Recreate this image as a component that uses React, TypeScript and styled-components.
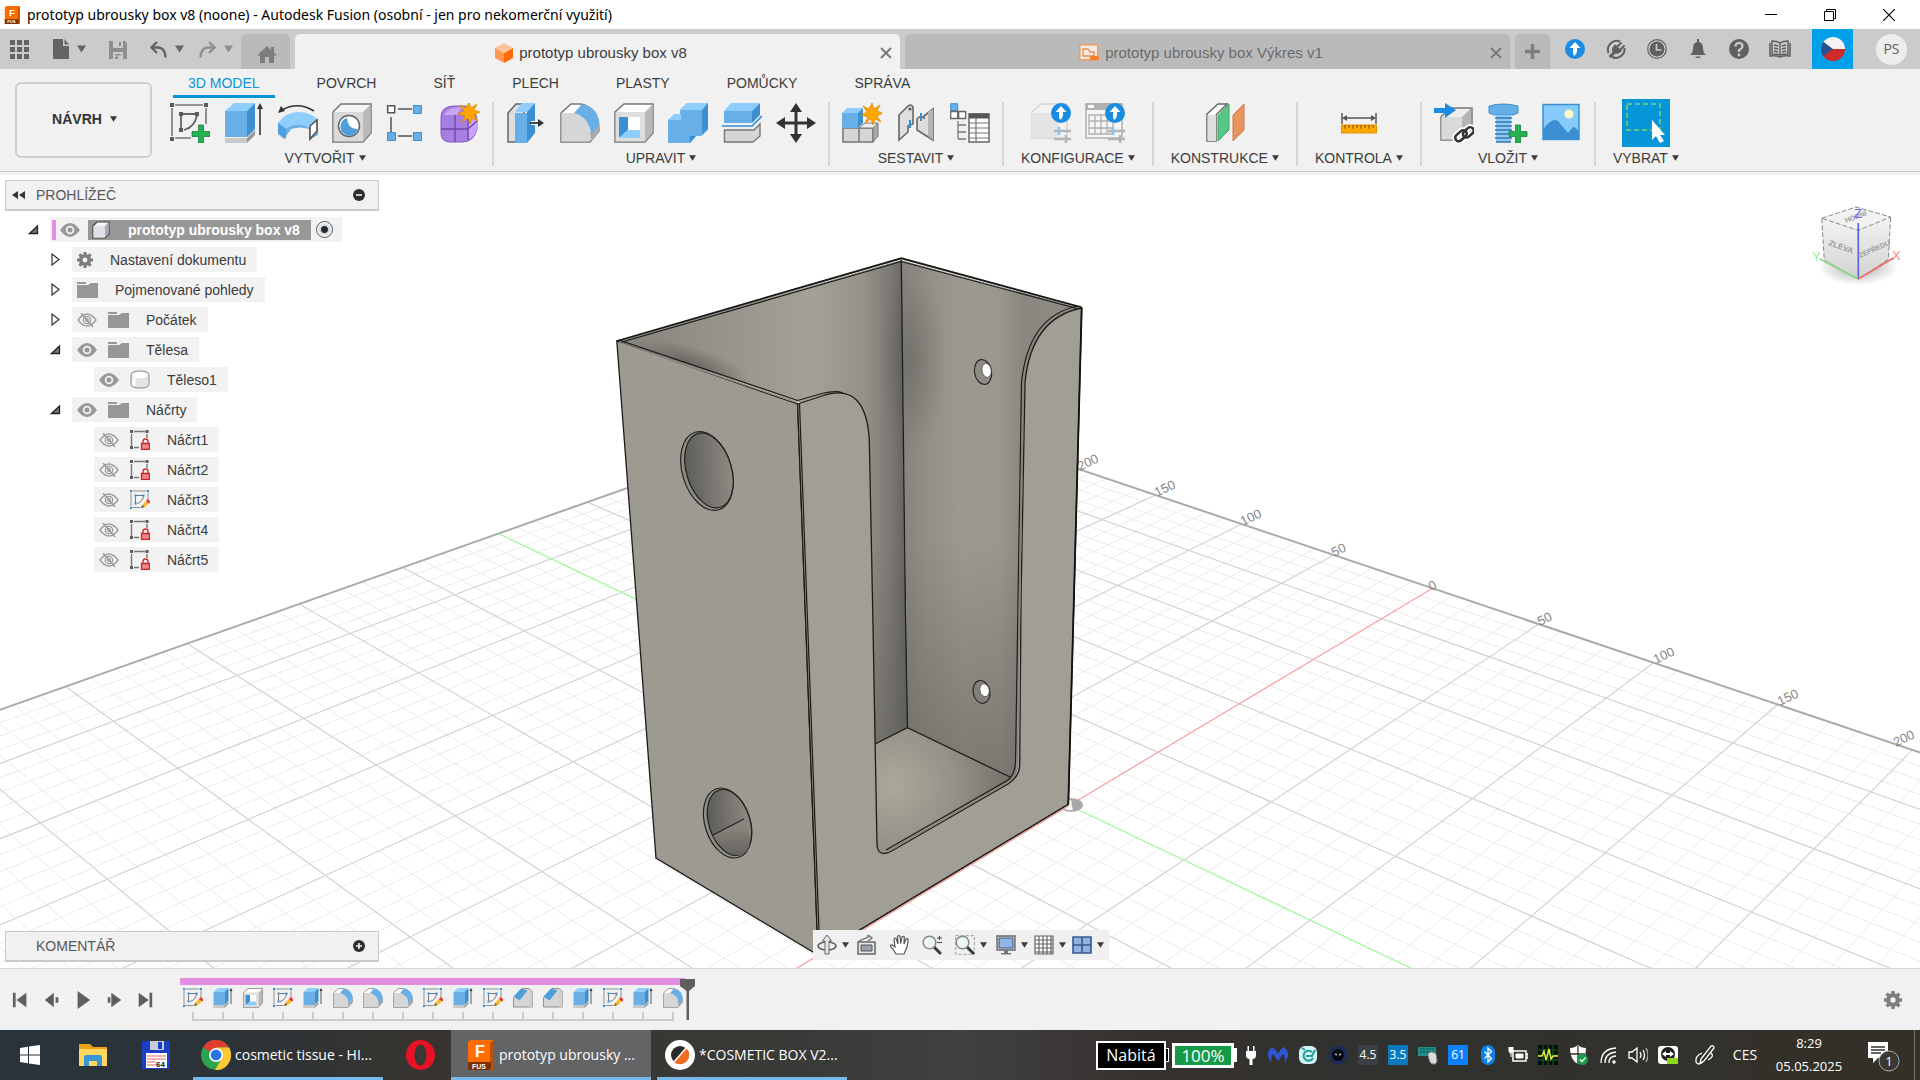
import React from "react";
import styled, { createGlobalStyle } from "styled-components";

const ui = `"Liberation Sans", Arial, sans-serif`;
const win = `"Open Sans", "Noto Sans", sans-serif`;

const Global = createGlobalStyle`
  *, *::before, *::after { box-sizing: border-box; }
  body { margin: 0; font-family: ${ui}; font-size: 14px; color: #3c3c3c; background: #fff; overflow: hidden; }
  button { font: inherit; color: inherit; background: none; border: 0; padding: 0; margin: 0; display: flex; align-items: center; justify-content: center; }
  svg { display: block; flex: none; }
  ul { list-style: none; margin: 0; padding: 0; }
`;

/* ---------- shell ---------- */
const Shell = styled.div`
  display: flex;
  flex-direction: column;
  height: 100vh;
`;

/* ---------- title bar ---------- */
const TitleBar = styled.header`
  display: flex;
  align-items: center;
  height: 29px;
  flex: none;
  padding: 0 5px 0 3px;
  gap: 6px;
  background: #fff;
  color: #000;
  font: 14px/20px "Noto Sans", sans-serif;
`;
const TitleText = styled.span`
  flex: 1;
`;
const WinButton = styled.button`
  width: 53px;
  height: 28px;
`;

/* ---------- document tab bar ---------- */
const TabBar = styled.div`
  display: flex;
  align-items: flex-end;
  height: 40px;
  flex: none;
  background: #cbcbcb;
  gap: 5px;
`;
const QuickTools = styled.div`
  display: flex;
  align-items: center;
  width: 236px;
  height: 40px;
  padding-left: 10px;
  color: #646464;
`;
const QuickButton = styled.button<{ $w: number; $dim?: boolean }>`
  width: ${(p) => p.$w}px;
  height: 32px;
  gap: 8px;
  justify-content: flex-start;
  color: ${(p) => (p.$dim ? "#8f8f8f" : "#646464")};
`;
const HomeTab = styled.button`
  width: 49px;
  height: 35px;
  padding: 6px 0 0 2px;
  border-radius: 5px 5px 0 0;
  background: #bababa;
  color: #7d7d7d;
`;
const DocTab = styled.div<{ $active?: boolean }>`
  flex: 1;
  display: flex;
  align-items: center;
  justify-content: center;
  height: 35px;
  gap: 5px;
  padding: 2px 7px 0 13px;
  border-radius: 5px 5px 0 0;
  font-size: 15px;
  background: ${(p) => (p.$active ? "#f1f1f1" : "#bababa")};
  color: ${(p) => (p.$active ? "#3c3c3c" : "#6b6b6b")};
`;
const DocName = styled.button`
  flex: 1;
  gap: 6px;
`;
const AddTab = styled(HomeTab)`
  width: 35px;
  padding: 0;
`;
const TopActions = styled.div`
  display: flex;
  align-items: center;
  width: 365px;
  height: 40px;
  padding-left: 4px;
  color: #606060;
`;
const TopButton = styled.button`
  width: 41px;
  height: 40px;
  padding-right: 9px;
`;
const FlagButton = styled.button`
  width: 41px;
  height: 40px;
  margin-left: 7px;
  background: #00a0e9;
`;
const Avatar = styled.button`
  width: 31px;
  height: 31px;
  margin-left: 23px;
  border-radius: 50%;
  background: #ededed;
  font: 14px/20px ${win};
`;

/* ---------- ribbon ---------- */
const Ribbon = styled.div`
  display: flex;
  height: 103px;
  flex: none;
  background: #f1f1f1;
  border-bottom: 1px solid #c8c8c8;
`;
const RibbonEdge = styled.div`
  height: 3px;
  flex: none;
  background: #f1f1f1;
`;
const Workspace = styled.button`
  width: 137px;
  height: 76px;
  margin: 13px 6px 0 15px;
  border: 2px solid #cfcfcf;
  border-radius: 6px;
  font-weight: bold;
  gap: 8px;
  color: #333;
  padding: 0 0 2px 2px;
`;
const RibbonBody = styled.div`
  flex: 1;
`;
const RibbonTabs = styled.nav`
  display: flex;
  height: 29px;
  gap: 27px;
  padding-left: 15px;
`;
const RibbonTab = styled.button<{ $active?: boolean }>`
  padding: 0 15px;
  height: 29px;
  color: ${(p) => (p.$active ? "#0696d7" : "#3c3c3c")};
  border-top: 1px solid transparent;
  border-bottom: 3px solid ${(p) => (p.$active ? "#0696d7" : "transparent")};
`;
const Groups = styled.div`
  display: flex;
`;
const Group = styled.section`
  display: flex;
  flex-direction: column;
  align-items: center;
  padding: 0 12px;
`;
const GroupIcons = styled.div`
  display: flex;
  align-items: center;
  height: 50px;
  gap: 14px;
`;
const GroupLabel = styled.button`
  gap: 4px;
  height: 20px;
  padding: 0 5px;
`;
const Divider = styled.div`
  width: 2px;
  height: 64px;
  margin-top: 4px;
  background: #d4d4d4;
`;
const ToolButton = styled.button<{ $selected?: boolean }>`
  width: ${(p) => (p.$selected ? 48 : 40)}px;
  height: ${(p) => (p.$selected ? 48 : 40)}px;
  background: ${(p) => (p.$selected ? "#0696d7" : "none")};
`;

/* ---------- canvas ---------- */
const Stage = styled.main`
  position: relative;
  flex: 1;
  min-height: 0;
  overflow: hidden;
  background: #fff;
`;
const Scene = styled.svg`
  position: absolute;
  inset: 0;
  width: 100%;
  height: 100%;
`;
const CubeSpot = styled.div`
  position: absolute;
  top: 22px;
  right: 16px;
`;
const BrowserPanel = styled.aside`
  position: absolute;
  top: 5px;
  left: 5px;
  width: 374px;
`;
const PanelHead = styled.div`
  display: flex;
  align-items: center;
  width: 374px;
  height: 31px;
  padding: 0 13px 0 6px;
  background: #f1f1f1;
  border: 1px solid #c9c9c9;
  border-bottom-width: 2px;
  color: #585858;
`;
const PanelTitle = styled.span`
  flex: 1;
  padding-left: 11px;
`;
const HeadSlot = styled.button`
  width: 13px;
  height: 16px;
`;
const Tree = styled.ul`
  display: flex;
  flex-direction: column;
  gap: 5px;
  padding-top: 6px;
`;
const Row = styled.li<{ $level: number }>`
  display: flex;
  align-items: center;
  height: 25px;
  padding-left: ${(p) => 23 + p.$level * 22}px;
`;
const Expander = styled.button`
  width: 11px;
  height: 25px;
  margin-right: 11px;
`;
const NoExpander = styled.span`
  width: 22px;
`;
const Chip = styled.div`
  display: flex;
  align-items: center;
  height: 25px;
  padding: 0 11px 0 5px;
  background: #f2f2f2;
`;
const ChipIcon = styled.span`
  display: flex;
  margin-right: 11px;
`;
const ChipText = styled.span`
  padding-left: 6px;
`;
const RootChip = styled(Chip)`
  padding: 0 9px 0 2px;
`;
const PinkMark = styled.span`
  width: 4px;
  height: 20px;
  margin-right: 4px;
  background: #e38ee3;
`;
const RootName = styled.span`
  display: flex;
  align-items: center;
  height: 20px;
  padding: 0 11px 0 4px;
  margin: 0 5px 0 8px;
  gap: 18px;
  background: #979797;
  color: #fff;
  font-weight: bold;
`;
const ActiveRadio = styled.input`
  appearance: none;
  width: 17px;
  height: 17px;
  margin: 0;
  border: 1px solid #555;
  border-radius: 50%;
  background: radial-gradient(circle, #2b2b2b 0 3px, #cfd5de 4px, #fff 8px);
`;
const CommentPanel = styled(PanelHead)`
  position: absolute;
  left: 5px;
  bottom: 6px;
`;
const NavBar = styled.div`
  position: absolute;
  bottom: 8px;
  left: 50%;
  transform: translateX(-50%);
  margin-left: 1px;
  display: flex;
  align-items: center;
  height: 30px;
  padding: 0 4px 0 3px;
  background: #f0f0f0;
`;
const NavButton = styled.button<{ $w: number }>`
  width: ${(p) => p.$w}px;
  height: 30px;
  gap: 5px;
`;

/* ---------- timeline ---------- */
const Timeline = styled.section`
  display: flex;
  height: 62px;
  flex: none;
  background: #f1f1f1;
  border-top: 1px solid #d6d6d6;
`;
const Playback = styled.div`
  display: flex;
  align-items: center;
  width: 178px;
  padding-left: 5px;
`;
const PlayButton = styled.button`
  width: 31px;
  height: 30px;
`;
const Track = styled.div`
  position: relative;
  padding-top: 9px;
`;
const TrackBar = styled.div`
  height: 7px;
  margin: 0 3px 0 2px;
  background: #e38ee3;
`;
const Steps = styled.div`
  display: flex;
`;
const Step = styled.button`
  width: 30px;
  height: 26px;
`;
const Ruler = styled.div`
  display: flex;
  border-bottom: 2px solid #cbcbcb;
  margin: 0 14px;
  padding-top: 1px;
  justify-content: space-between;
`;
const Tick = styled.i`
  width: 2px;
  height: 7px;
  background: #cbcbcb;
`;
const Marker = styled.div`
  position: absolute;
  right: -7px;
  top: 10px;
`;
const Settings = styled.button`
  margin: 0 18px 0 auto;
`;

/* ---------- taskbar ---------- */
const Taskbar = styled.footer`
  display: flex;
  align-items: center;
  height: 50px;
  flex: none;
  color: #fff;
  font: 14px/20px ${win};
  background: linear-gradient(90deg, #28333a 0, #2c3338 12%, #37342f 22%, #3a3a38 42%, #404042 50%, #37302d 60%, #30322f 70%, #343028 100%);
`;
const Launch = styled.button<{ $w: number }>`
  width: ${(p) => p.$w}px;
  height: 50px;
`;
const TaskButton = styled.button<{ $w: number; $active?: boolean }>`
  width: ${(p) => p.$w}px;
  height: 50px;
  padding: 3px 0 0 8px;
  justify-content: flex-start;
  gap: 4px;
  border-bottom: 3px solid #76b9ed;
  background: ${(p) => (p.$active ? "#626465" : "transparent")};
  margin-right: 6px;
`;
const FirstTask = styled(TaskButton)`
  margin-left: 7px;
`;
const Logo = styled.span`
  display: flex;
  padding-left: 6px;
`;
const Charged = styled.span`
  margin-left: auto;
  width: 70px;
  height: 29px;
  border: 2px solid #fff;
  background: #000;
  font-size: 16px;
  line-height: 24px;
  text-align: center;
`;
const Nub = styled.i<{ $fill?: boolean }>`
  width: 3px;
  height: 14px;
  border: 1px solid #fff;
  border-left: 0;
  background: ${(p) => (p.$fill ? "#fff" : "#000")};
`;
const Battery = styled.span`
  width: 62px;
  height: 25px;
  margin-left: 3px;
  border: 3px solid #fff;
  background: #169a4a;
  font-size: 17px;
  line-height: 19px;
  text-align: center;
`;
const Tray = styled.div`
  display: flex;
  align-items: center;
  padding-left: 2px;
`;
const TrayItem = styled.button<{ $narrow?: boolean }>`
  width: ${(p) => (p.$narrow ? 24 : 30)}px;
  height: 50px;
`;
const Gauge = styled.span<{ $bg: string }>`
  width: 20px;
  height: 20px;
  background: ${(p) => p.$bg};
  font-size: 12px;
  line-height: 20px;
  text-align: center;
`;
const PenButton = styled.button`
  width: 44px;
  height: 50px;
`;
const Lang = styled.button`
  width: 36px;
  margin-right: 4px;
`;
const Clock = styled.div`
  width: 84px;
  margin-right: 14px;
  text-align: center;
  font-size: 13px;
  line-height: 23px;
`;
const Notices = styled.button`
  width: 36px;
  margin-right: 13px;
`;
const PeekEdge = styled.i`
  width: 6px;
  height: 50px;
  border-left: 1px solid #77746e;
`;

/* ---------- small glyphs ---------- */
const Caret = ({ s = 7 }: { s?: number }) => (
  <svg width={s} height={s - 1} viewBox="0 0 10 8"><path d="M0 0h10L5 8z" fill="currentColor" /></svg>
);
const Circle = ({ plus }: { plus?: boolean }) => (
  <svg width="12" height="12" viewBox="0 0 12 12"><circle cx="6" cy="6" r="6" fill="#2e2e2e" /><path d={plus ? "M3 6h6M6 3v6" : "M3 6h6"} stroke="#f1f1f1" strokeWidth="1.6" /></svg>
);
const Cross = () => (
  <svg width="14" height="14" viewBox="0 0 14 14"><path d="M2 2l10 10M12 2L2 12" stroke="#777" strokeWidth="1.8" /></svg>
);
const FusionLogo = ({ w = 30, h = 30 }: { w?: number; h?: number }) => (
  <svg width={w} height={h} viewBox="0 0 30 30">
    <path d="M3 2l3-2h22v28l-3 2H3z" fill="#ff6d00" /><path d="M25 2h3v28h-3z" fill="#c24e00" />
    <path d="M3 22h23v6l-2 2H3z" fill="#7a2f00" />
    <text x="10" y="17" fontFamily={ui} fontWeight="bold" fontSize="16" fill="#fff">F</text>
    <text x="7" y="29" fontFamily={ui} fontWeight="bold" fontSize="7" fill="#fff">FUS</text>
  </svg>
);
const Up = ({ x = 0, y = 0 }: { x?: number; y?: number }) => (
  <g transform={`translate(${x} ${y})`}><circle cx="10" cy="10" r="10" fill="#1a8ce3" /><path d="M10 3l5.500 6H12v3q0 3-3 5-1.500-3-1-5V9H4.500z" fill="#fff" /></g>
);
const Star = ({ x, y }: { x: number; y: number }) => (
  <path transform={`translate(${x} ${y})`} d="M0-11l2 6 6-4-3 6 6 2-6 3 4 6-6-3-2 6-2-6-6 4 3-6-7-2 6-3-4-6 6 3z" fill="#ffa500" stroke="#d98800" strokeWidth=".7" />
);
const Pencil = () => <g><path d="M22 36l3-7 8-8 5 5-8 8z" fill="#f9b92b" /><path d="M22 36l2.500-6 4 4z" fill="#555" /><path d="M32 22l3-4 6 5-3 4z" fill="#e33" /></g>;

const SketchSteel = ({ s = 40, blue, pencil, plus }: { s?: number; blue?: boolean; pencil?: boolean; plus?: boolean }) => {
  const c = blue ? "#2f8fd8" : "#5b5b5b";
  return (
    <svg width={s} height={s} viewBox="0 0 40 40">
      <path d="M2 5v28M5 2h28M36 5v16M5 35h16" stroke="#777" strokeWidth="1.600" fill="none" />
      <path d="M11 11h16M11 13v13M27 12q-2 12-13 15" stroke="#666" strokeWidth="1.800" fill="none" />
      <g fill={c}><path d="M0 0h4v4H0zM34 0h4v4h-4zM0 34h4v4H0zM9 9h4v4H9zM25 9h4v4h-4zM9 25h4v4H9z" /></g>
      {plus && <path d="M28.500 22h5v6.500H40v5h-6.500V40h-5v-6.500H22v-5h6.500z" fill="#25b052" stroke="#16833a" strokeWidth=".8" />}
      {pencil && <Pencil />}
    </svg>
  );
};
const Extrude = ({ s = 40 }: { s?: number }) => (
  <svg width={s} height={s} viewBox="0 0 40 40">
    <path d="M1 35h22l8-8v5l-8 8H1z" fill="#999" /><path d="M1 35h22v5H1z" fill="#c9c9c9" />
    <path d="M1 8h22v26H1z" fill="#67afe6" /><path d="M1 8l9-8h21l-8 8z" fill="#8fcdfd" /><path d="M23 8l8-8v26l-8 8z" fill="#3c8fd0" />
    <path d="M36 32V4" stroke="#333" strokeWidth="1.600" /><path d="M36 0l3 6h-6z" fill="#333" />
  </svg>
);
const Fillet = ({ s = 40 }: { s?: number }) => (
  <svg width={s} height={s} viewBox="0 0 40 40">
    <path d="M1 10L11 1h10q18 4 18 27l-9 11H1z" fill="#fff" stroke="#777" strokeWidth="1.500" />
    <path d="M1.500 10H14q15 3 16 19v9.500H1.500z" fill="#d6d6d6" /><path d="M30 30l9-9v8l-8 9.500z" fill="#a9a9a9" />
    <path d="M14 10l8-9q16 3 17.500 20L31 31Q29 14 14 10z" fill="#67afe6" />
  </svg>
);
const Chamfer = ({ s = 40 }: { s?: number }) => (
  <svg width={s} height={s} viewBox="0 0 40 40">
    <path d="M1 20L18 1h14l7 6v31H1z" fill="#d6d6d6" stroke="#777" strokeWidth="1.500" /><path d="M32 1l7 7v30h-7z" fill="#d0d0d0" />
    <path d="M1 17L16 1l13 4-16 20z" fill="#4f9fdc" />
  </svg>
);
const Shell3d = ({ s = 40 }: { s?: number }) => (
  <svg width={s} height={s} viewBox="0 0 40 40">
    <path d="M1 9L10 1h29v29l-8 9H1z" fill="#fff" stroke="#777" strokeWidth="1.500" />
    <path d="M1.700 9H31v29.300H1.700z" fill="#dedede" /><path d="M31 9l7.500-7.500v28.300L31 38.500z" fill="#b9b9b9" /><path d="M5 14h21v21H5z" fill="#fff" />
    <path d="M5 14h9v13l-9 8z" fill="#3c8fd0" /><path d="M14 27h12v8H5z" fill="#8fcdfd" />
  </svg>
);

const ribbonIcons: Record<string, React.ReactNode> = {
  sketch: <SketchSteel plus />,
  extrude: <Extrude />,
  revolve: (
    <svg width="40" height="40" viewBox="0 0 40 40">
      <path d="M0 20l6-5h28l6 4v13l-9 5V26q-9-3-18 0l-7 10-6-5z" fill="#67afe6" /><path d="M0 20Q8 9 20 9q13 0 20 8l-9 8q-12-7-23 1z" fill="#8fcdfd" /><path d="M0 20l8 6v10l-8-6z" fill="#4f9fdc" />
      <path d="M32 23l7-6v11l-7 8z" fill="#fff" stroke="#555" strokeWidth="1.600" /><path d="M4 7q16-9 32 1" stroke="#333" strokeWidth="1.700" fill="none" /><path d="M0 10l3-7 4 5z" fill="#333" />
    </svg>
  ),
  hole: (
    <svg width="40" height="40" viewBox="0 0 40 40">
      <path d="M1 9l8-8h30v29l-8 9H1z" fill="#f5f5f5" stroke="#777" strokeWidth="1.500" /><path d="M1.700 9H31v29.300H1.700z" fill="#d9d9d9" /><path d="M31 9l7.500-7.500v28.300L31 38.500z" fill="#b9b9b9" />
      <circle cx="17" cy="23" r="10.500" fill="#fff" stroke="#666" strokeWidth="1.500" /><path d="M15 15a9 9 0 1 0 11 11q-10 1-11-11z" fill="#4f9fdc" />
    </svg>
  ),
  pattern: (
    <svg width="40" height="40" viewBox="0 0 40 40">
      <path d="M12 6h14M12 33h14M5 14v15" stroke="#555" strokeWidth="1.500" /><path d="M1.700 2.700h7v7h-7z" fill="#fff" stroke="#555" strokeWidth="1.500" />
      <path d="M27.500 2.500h8v8h-8zM1.500 29.500h8v8h-8zM27.500 29.500h8v8h-8z" fill="#67afe6" stroke="#3c8fd0" />
    </svg>
  ),
  form: (
    <svg width="40" height="40" viewBox="0 0 40 40">
      <path d="M1 14q0-11 14-11h10q12 5 12 14v9q-3 13-15 13H9q-8-1-8-9z" fill="#a77ee2" stroke="#8458c4" /><path d="M4 12Q8 4 22 4l-5 8zM28 14q8-2 9 3v8q-1 8-8 11z" fill="#c9a5f7" />
      <path d="M1 26h27l9-8M15 12v27M28 16v21" stroke="#6e45ab" strokeWidth="1.300" fill="none" /><Star x={29} y={10} />
    </svg>
  ),
  presspull: (
    <svg width="40" height="40" viewBox="0 0 40 40">
      <path d="M2 10l8-9h8v38H2z" fill="#dedede" stroke="#666" strokeWidth="1.500" /><path d="M9 10h12v30H9z" fill="#67afe6" /><path d="M9 9l7-9h13l-8 9z" fill="#8fcdfd" /><path d="M21 9l8-9v30l-8 10z" fill="#3c8fd0" />
      <path d="M25 20h8" stroke="#fff" strokeWidth="4" /><path d="M24 20h9" stroke="#333" strokeWidth="1.800" /><path d="M38 20l-6-4v8z" fill="#333" />
    </svg>
  ),
  fillet: <Fillet />,
  shell: <Shell3d />,
  combine: (
    <svg width="40" height="40" viewBox="0 0 40 40">
      <path d="M0 16h12V7L19 0h21v27l-7 6h-5l-6 7H0z" fill="#67afe6" /><path d="M0 17l6-6h7v6zM13 7l6-7h21l-6 7z" fill="#8fcdfd" /><path d="M34 7l6-7v25l-6 7zM22 33h6l-6 7z" fill="#3c8fd0" />
    </svg>
  ),
  split: (
    <svg width="40" height="40" viewBox="0 0 40 40">
      <path d="M2 8h28v12H2z" fill="#67afe6" /><path d="M2 8l7-8h29l-8 8z" fill="#8fcdfd" /><path d="M30 8l8-8v12l-8 8z" fill="#3c8fd0" />
      <path d="M0 23h30l10-10" stroke="#2f8fd8" strokeWidth="1.600" fill="none" /><path d="M2.500 27H32l6-6v12l-7 6H2.500z" fill="#d6d6d6" stroke="#777" strokeWidth="1.400" />
    </svg>
  ),
  move: <svg width="40" height="40" viewBox="0 0 40 40"><path d="M20 6v28M6 20h28" stroke="#333" strokeWidth="3" /><path d="M20 0l6 9H14zM20 40l6-9H14zM0 20l9-6v12zM40 20l-9-6v12z" fill="#333" /></svg>,
  component: (
    <svg width="40" height="40" viewBox="0 0 40 40">
      <path d="M1 25h16v14H1zM17 25h14v14H17z" fill="#d6d6d6" stroke="#777" strokeWidth="1.500" /><path d="M17 25l6-5h13l-5 5z" fill="#eee" stroke="#777" /><path d="M31 25l5-5v13l-5 6z" fill="#aaa" stroke="#777" />
      <path d="M0 10h16v15H0z" fill="#67afe6" /><path d="M0 10l5-5h16l-5 5z" fill="#8fcdfd" /><path d="M16 10l5-5v15l-5 5z" fill="#3c8fd0" /><Star x={30} y={11} />
    </svg>
  ),
  joint: (
    <svg width="40" height="40" viewBox="0 0 40 40">
      <path d="M3 12L11 4q4-4 6 0v17l-5 2v6l-9 8zM37 6v31L21 27V16q3-4 7-1v-2z" fill="#dedede" stroke="#666" strokeWidth="1.600" /><path d="M37 6v31l-5-4V9z" fill="#b5b5b5" /><path d="M14 17v8M25 10v8" stroke="#2f8fd8" strokeWidth="2" /><circle cx="14" cy="6" r="1.500" fill="#555" />
    </svg>
  ),
  bom: (
    <svg width="40" height="40" viewBox="0 0 40 40">
      <path d="M.7.7h7v7h-7z" fill="#67afe6" stroke="#3c8fd0" /><path d="M.7 8.500h7v7h-7zM8.700 8.500h7v7h-7z" fill="#fff" stroke="#666" strokeWidth="1.300" /><path d="M8 18v18M8 22h8M8 29h8M8 36h8" stroke="#777" strokeWidth="1.300" />
      <path d="M19 11h20v28H19z" fill="#fff" stroke="#666" strokeWidth="1.500" /><path d="M19 10.500h20v5H19z" fill="#555" /><path d="M19 20h20M19 25h20M19 30h20M19 35h20M26 15v24" stroke="#777" strokeWidth="1.200" />
    </svg>
  ),
  config1: (
    <svg width="40" height="40" viewBox="0 0 40 40">
      <path d="M1 9l9-8h26v34H1z" fill="#f2f2f2" stroke="#c4c4c4" /><path d="M1 10h27v25H1z" fill="#e4e4e4" /><Up x={20} y={0} />
      <path d="M23 28h18M23 36h18" stroke="#b5b5b5" strokeWidth="2.500" /><path d="M28 24v8" stroke="#8fc3f0" strokeWidth="2.500" /><path d="M35 32v8" stroke="#b5b5b5" strokeWidth="2.500" />
    </svg>
  ),
  config2: (
    <svg width="40" height="40" viewBox="0 0 40 40">
      <path d="M1 1h36v34H1z" fill="#f5f5f5" stroke="#b0b0b0" strokeWidth="1.500" /><path d="M1 0h36v7H1z" fill="#b0b0b0" /><path d="M3 2h6v3H3z" fill="#fff" /><path d="M4 12h24v19H4zM4 18h24M4 25h24M10 12v19M16 12v19M22 12v19" fill="none" stroke="#b0b0b0" strokeWidth="1.300" /><Up x={20} y={0} />
      <path d="M23 28h18M23 36h18" stroke="#b5b5b5" strokeWidth="2.500" /><path d="M28 24v8" stroke="#8fc3f0" strokeWidth="2.500" /><path d="M35 32v8" stroke="#b5b5b5" strokeWidth="2.500" />
    </svg>
  ),
  plane: (
    <svg width="40" height="40" viewBox="0 0 40 40">
      <path d="M2 11L13 1h9l-11 11v26H2z" fill="#fff" stroke="#666" strokeWidth="1.500" /><path d="M2.500 12H11v26H2.500z" fill="#dedede" /><path d="M13 13L24 1v26L13 38z" fill="#57c785" stroke="#3aa564" /><path d="M28 12L39 1v26L28 38z" fill="#e8965f" stroke="#cd7a42" />
    </svg>
  ),
  measure: (
    <svg width="40" height="40" viewBox="0 0 40 40">
      <path d="M3 10v11M37 10v11M5 15h30" stroke="#555" strokeWidth="1.500" /><path d="M3 15l5-3v6zM37 15l-5-3v6z" fill="#555" /><path d="M2.500 22h35v8h-35z" fill="#ffa800" stroke="#dd9000" /><path d="M6 22v4M10 22v3M14 22v4M18 22v3M22 22v4M26 22v3M30 22v4M34 22v3" stroke="#7c5200" />
    </svg>
  ),
  insert: (
    <svg width="40" height="40" viewBox="0 0 40 40">
      <path d="M7 14l9-9h22v22L28 37H7z" fill="#eee" stroke="#777" strokeWidth="1.500" /><path d="M7.500 14H28v22.500H7.500z" fill="#d9d9d9" /><path d="M28 14l9-9v22l-9 9z" fill="#b5b5b5" />
      <path d="M0 5h11V0l11 7-11 8v-5H0z" fill="#1a8ce3" /><g fill="none" stroke="#fff" strokeWidth="6"><rect x="20" y="29" width="13" height="7" rx="3.500" transform="rotate(-42 27 32)" /><rect x="28" y="26" width="12" height="7" rx="3.500" transform="rotate(-42 34 29)" /></g>
      <g fill="none" stroke="#333" strokeWidth="2.600"><rect x="20" y="29" width="13" height="7" rx="3.500" transform="rotate(-42 27 32)" /><rect x="28" y="26" width="12" height="7" rx="3.500" transform="rotate(-42 34 29)" /></g>
    </svg>
  ),
  bolt: (
    <svg width="40" height="40" viewBox="0 0 40 40">
      <path d="M1 3q14-4 29 0v7l-5 2H6l-5-2z" fill="#67afe6" stroke="#3c8fd0" /><path d="M8 12h15v27H8z" fill="#8fc8f5" /><path d="M7 15h17M7 19h17M7 23h17M7 27h17M7 31h17M7 35h17M8 39h15" stroke="#3177b3" strokeWidth="1.500" />
      <path d="M27.500 22h5v6.500H39v5h-6.500V40h-5v-6.500H21v-5h6.500z" fill="#25b052" stroke="#16833a" strokeWidth=".8" />
    </svg>
  ),
  image: (
    <svg width="40" height="40" viewBox="0 0 40 40"><path d="M1 1.500h36v35H1z" fill="#86cbfb" stroke="#3c8fd0" strokeWidth="1.500" /><path d="M1 27q9-13 15-9l10 12 5-6q3 0 6 5v8H1z" fill="#3c8fd0" /><circle cx="27" cy="11" r="4.500" fill="#fff7c4" /></svg>
  ),
  select: (
    <svg width="48" height="48" viewBox="0 0 48 48"><path d="M5 5h33v26H5z" fill="none" stroke="#74d275" strokeWidth="1.600" strokeDasharray="5 3" /><path d="M30 21l13 15h-5l4 6-4 2-4-7-4 4z" fill="#fff" /></svg>
  ),
};

const groups = [
  { name: "VYTVOŘIT", icons: ["sketch", "extrude", "revolve", "hole", "pattern", "form"] },
  { name: "UPRAVIT", icons: ["presspull", "fillet", "shell", "combine", "split", "move"] },
  { name: "SESTAVIT", icons: ["component", "joint", "bom"] },
  { name: "KONFIGURACE", icons: ["config1", "config2"] },
  { name: "KONSTRUKCE", icons: ["plane"] },
  { name: "KONTROLA", icons: ["measure"] },
  { name: "VLOŽIT", icons: ["insert", "bolt", "image"] },
  { name: "VYBRAT", icons: ["select"] },
];

/* ---------- browser tree ---------- */
const Eye = ({ off }: { off?: boolean }) => (
  <svg width="20" height="14" viewBox="0 0 20 14">
    {off ? (
      <g fill="none" stroke="#9a9a9a" strokeWidth="1.300"><path d="M1 7q9-12 18 0-9 12-18 0z" /><circle cx="10" cy="7" r="3.700" /><circle cx="10" cy="7" r="1.300" /><path d="M4 0l12 14" strokeWidth="1.500" /></g>
    ) : (
      <g><path d="M0 7q10-14 20 0-10 14-20 0z" fill="#999" /><circle cx="10" cy="7" r="3.400" fill="#999" stroke="#f2f2f2" strokeWidth="1.800" /></g>
    )}
  </svg>
);
const Folder = () => <svg width="21" height="16" viewBox="0 0 21 16"><path d="M0 0h9v2H0zM0 3h11l3-2h7v15H0z" fill="#979797" /></svg>;
const gearTeeth = [0, 45, 90, 135].map((a) => <path key={a} d="M10 0v5M10 15v5" stroke="currentColor" strokeWidth="3.800" transform={`rotate(${a} 10 10)`} />);
const Gear = ({ s = 17 }: { s?: number }) => (
  <svg width={s} height={s} viewBox="0 0 20 20" color="#7d7d7d">{gearTeeth}<circle cx="10" cy="10" r="5.300" fill="none" stroke="currentColor" strokeWidth="4.600" /></svg>
);
const Body = () => <svg width="20" height="19" viewBox="0 0 20 19"><path d="M1 5q0-4 9-4t9 4v9q0 4-9 4t-9-4z" fill="#e3e3e3" stroke="#8a8a8a" /><ellipse cx="10" cy="5" rx="8" ry="3.300" fill="#fff" /><path d="M4 8v8" stroke="#fff" strokeWidth="3" /></svg>;
const LockedSketch = () => (
  <svg width="20" height="20" viewBox="0 0 20 20"><path d="M1.500 4v12M4 1.500h11M17 4v4M4 17.500h5" stroke="#777" strokeWidth="1.400" /><path d="M0 0h3v3H0zM15.500 0h3v3h-3zM0 16h3v3H0z" fill="#5b5b5b" /><path d="M13 14v-2.500a2.500 2.500 0 0 1 5 0V14" fill="none" stroke="#c33" strokeWidth="1.400" /><path d="M11.500 13.500h8v6h-8z" fill="#e88" stroke="#c22" strokeWidth="1.300" /></svg>
);
type Node = { text: string; level: number; open?: boolean; eye?: "on" | "off"; icon: React.ReactNode };
const nodes: Node[] = [
  { text: "Nastavení dokumentu", level: 1, open: false, icon: <Gear s={16} /> },
  { text: "Pojmenované pohledy", level: 1, open: false, icon: <Folder /> },
  { text: "Počátek", level: 1, open: false, eye: "off", icon: <Folder /> },
  { text: "Tělesa", level: 1, open: true, eye: "on", icon: <Folder /> },
  { text: "Těleso1", level: 2, eye: "on", icon: <Body /> },
  { text: "Náčrty", level: 1, open: true, eye: "on", icon: <Folder /> },
  { text: "Náčrt1", level: 2, eye: "off", icon: <LockedSketch /> },
  { text: "Náčrt2", level: 2, eye: "off", icon: <LockedSketch /> },
  { text: "Náčrt3", level: 2, eye: "off", icon: <SketchSteel s={20} blue pencil /> },
  { text: "Náčrt4", level: 2, eye: "off", icon: <LockedSketch /> },
  { text: "Náčrt5", level: 2, eye: "off", icon: <LockedSketch /> },
];
const Arrow = ({ open }: { open?: boolean }) => (
  <svg width="11" height="13" viewBox="0 0 11 13">
    {open ? <path d="M1.500 10.500L9.500 3v7.500z" fill="#777" stroke="#222" strokeWidth="1.300" /> : <path d="M2 1v11l7-5.500z" fill="#fff" stroke="#333" strokeWidth="1.200" />}
  </svg>
);
const NodeChip = ({ n }: { n: Node }) => (
  <Chip>
    {n.eye && <ChipIcon><Eye off={n.eye === "off"} /></ChipIcon>}
    <ChipIcon>{n.icon}</ChipIcon>
    <ChipText>{n.text}</ChipText>
  </Chip>
);

/* ---------- ground grid: least-squares perspective map from plane units (50 mm) to view ---------- */
const anchors = [
  [0, 0, 1070, 805], [4.8, 0, 1434, 588], [1, 0, 1158.7, 752.4], [2, 0, 1238.2, 704.5], [4, 0, 1381.4, 618.4],
  [4.8, 4, 1912.8, 750], [4.8, 2, 1652.3, 662.8], [4.8, -2, 1239.3, 523.7], [4.8, -4, 1077.5, 468.6],
  [0, 1, 1185, 860.5], [0, 2, 1309.5, 919.7], [1, 2, 1395.7, 856.4], [0, -6, 550.1, 557.8], [0, -6.8, 498, 533.3],
  [-2, -6.8, 300, 604.6], [-4, -6.8, 66.4, 686.6], [-2, -5, 417.9, 673.2], [-2, -3, 572.6, 761.7],
];
function fitPlane() {
  const A = Array.from({ length: 8 }, () => new Array(9).fill(0));
  const add = (r: number[], t: number) => {
    for (let i = 0; i < 8; i++) {
      for (let j = 0; j < 8; j++) A[i][j] += r[i] * r[j];
      A[i][8] += r[i] * t;
    }
  };
  anchors.forEach(([u, v, x, y]) => {
    add([u, v, 1, 0, 0, 0, -u * x, -v * x], x);
    add([0, 0, 0, u, v, 1, -u * y, -v * y], y);
  });
  for (let i = 0; i < 8; i++) {
    let p = i;
    for (let k = i + 1; k < 8; k++) if (Math.abs(A[k][i]) > Math.abs(A[p][i])) p = k;
    [A[i], A[p]] = [A[p], A[i]];
    for (let k = 0; k < 8; k++) {
      if (k === i) continue;
      const f = A[k][i] / A[i][i];
      for (let j = i; j < 9; j++) A[k][j] -= f * A[i][j];
    }
  }
  return A.map((r, i) => r[8] / r[i]);
}
const H = fitPlane();
const project = (u: number, v: number) => {
  const w = H[6] * u + H[7] * v + 1;
  return `${((H[0] * u + H[1] * v + H[2]) / w).toFixed(1)} ${((H[3] * u + H[4] * v + H[5]) / w).toFixed(1)}`;
};
const [U0, U1, V0, V1] = [-9, 4.8, -6.8, 5.6];
const seg = (a: number, b: number, c: number, d: number) => `M${project(a, b)}L${project(c, d)}`;
let minor = "";
let major = "";
for (let k = Math.round(U0 * 5); k < U1 * 5; k++) {
  const s = seg(k / 5, V0, k / 5, V1);
  if (k % 5) minor += s; else if (k) major += s;
}
for (let k = Math.round(V0 * 5) + 1; k <= V1 * 5; k++) {
  const s = seg(U0, k / 5, U1, k / 5);
  if (k % 5) minor += s; else if (k) major += s;
}
const rulerMarks = [
  ["200", 1080, 471], ["150", 1157, 497], ["100", 1243, 526], ["50", 1334, 557], ["0", 1431, 591],
  ["50", 1540, 626], ["100", 1656, 664], ["150", 1780, 706], ["200", 1896, 747],
] as const;

const Viewport = () => (
  <Scene viewBox="0 175 1920 793" preserveAspectRatio="xMidYMid slice" role="img" aria-label="prototyp ubrousky box">
    <defs>
      <linearGradient id="backLeft" x1="617" x2="905" y1="0" y2="0" gradientUnits="userSpaceOnUse">
        <stop offset="0" stopColor="#85837c" /><stop offset=".35" stopColor="#96938b" /><stop offset=".68" stopColor="#a3a097" /><stop offset=".86" stopColor="#949189" /><stop offset=".95" stopColor="#7a7872" /><stop offset="1" stopColor="#666460" />
      </linearGradient>
      <linearGradient id="backRight" x1="901" x2="1080" y1="0" y2="0" gradientUnits="userSpaceOnUse">
        <stop offset="0" stopColor="#84827b" /><stop offset=".14" stopColor="#908e86" /><stop offset=".35" stopColor="#9b9990" /><stop offset=".55" stopColor="#99978e" /><stop offset=".68" stopColor="#89877f" /><stop offset="1" stopColor="#8d8b83" />
      </linearGradient>
      <linearGradient id="deep" x1="0" x2="0" y1="540" y2="780" gradientUnits="userSpaceOnUse"><stop offset="0" stopColor="#5a5852" stopOpacity="0" /><stop offset="1" stopColor="#5a5852" stopOpacity=".5" /></linearGradient>
      <radialGradient id="shade"><stop offset="0" stopColor="#4e4c48" stopOpacity=".7" /><stop offset="1" stopColor="#4e4c48" stopOpacity="0" /></radialGradient>
      <radialGradient id="floor" cx="893" cy="785" r="125" gradientUnits="userSpaceOnUse"><stop offset="0" stopColor="#aca89a" /><stop offset=".5" stopColor="#969188" /><stop offset="1" stopColor="#6f6b65" /></radialGradient>
      <linearGradient id="bore" x1="0" x2="1" y1=".3" y2=".7"><stop offset="0" stopColor="#5c5a55" /><stop offset="1" stopColor="#8f8d85" /></linearGradient>
      <linearGradient id="bore2" x1="0" x2="0" y1="0" y2="1"><stop offset="0" stopColor="#8f8d85" /><stop offset="1" stopColor="#66645e" /></linearGradient>
      <clipPath id="inside"><path d="M617 341L901 260 1081 308V800H870V440L798 402z" /></clipPath>
    </defs>

    <path d={minor} stroke="#ececec" strokeWidth="1" fill="none" />
    <path d={major} stroke="#d3d3d3" strokeWidth="1.200" fill="none" />
    <path d={seg(U0, V0, U1, V0) + seg(U1, V0, U1, V1)} stroke="#a9a9a9" strokeWidth="2" fill="none" />
    <path d={seg(0, V0, 0, V1)} stroke="#a3f7a0" strokeWidth="1.300" />
    <path d={seg(U0, 0, U1, 0)} stroke="#f9a3a3" strokeWidth="1.300" />
    {rulerMarks.map(([t, x, y]) => (
      <text key={`${t}-${x}`} transform={`translate(${x} ${y}) rotate(-26)`} fontFamily={ui} fontSize="13" fill="#858585">{t}</text>
    ))}
    <ellipse cx="1071" cy="805" rx="11" ry="6" fill="#fff" fillOpacity=".6" stroke="#b5b5b5" strokeWidth="2" />
    <path d="M1071 799q11 0 11 6t-9 6z" fill="#a8a8a8" />

    {/* interior walls */}
    <g clipPath="url(#inside)">
      <path d="M617 341L901 260 908 728 866 750V440L798 402z" fill="url(#backLeft)" />
      <ellipse cx="690" cy="368" rx="66" ry="22" fill="url(#shade)" transform="rotate(17 690 368)" />
      <path d="M901 260l180 48-56 75-9 400-108-55z" fill="url(#backRight)" />
      <ellipse cx="912" cy="360" rx="34" ry="90" fill="url(#shade)" opacity=".5" />
    </g>
    <path d="M870 500h151v280h-10l-103-52-38 20z" fill="url(#deep)" />
    <path d="M872 746L908 728 1012 777 1014 786 886 856 874 852z" fill="url(#floor)" />
    <path d="M875 744l32.500-16.300L1010 777M901.300 260l4.100 350 2.100 118" fill="none" stroke="#1d1d1b" strokeWidth="1.300" />
    <g>
      <ellipse cx="983" cy="372" rx="8.500" ry="12.500" fill="#8d8b83" stroke="#2a2927" strokeWidth="1.200" transform="rotate(-10 983 372)" />
      <ellipse cx="986.500" cy="370.500" rx="4.600" ry="7" fill="#fff" stroke="#444" strokeWidth=".7" transform="rotate(-10 986 370)" />
      <ellipse cx="981.500" cy="692" rx="8.300" ry="11.500" fill="#83817a" stroke="#2a2927" strokeWidth="1.200" transform="rotate(-12 981 692)" />
      <ellipse cx="984.500" cy="690.300" rx="4.600" ry="6.500" fill="#fff" stroke="#444" strokeWidth=".7" transform="rotate(-12 984 690)" />
    </g>

    {/* outer faces */}
    <path d="M616.800 341L797.600 404 818 955 656 858z" fill="#9d9a92" stroke="#1c1c1a" strokeWidth="1.300" />
    <path d="M797.600 404L822 396Q866 381 869.300 440L872.700 610 877 845Q878 857 890 852L1008 784Q1019 777 1019.700 766L1021 600 1025 383Q1031 318 1081.700 308L1075 560 1068.300 804.300 818 955z" fill="#a19e96" stroke="#1c1c1a" strokeWidth="1.300" />
    <path d="M1021.500 383Q1028 316 1078 306M1021.500 383L1018 600 1015.500 764Q1014 775 1008 780L886 850" fill="none" stroke="#1c1c1a" strokeWidth="1.200" />
    <path d="M1023.300 383L1019.500 600 1017.600 765Q1016 777 1008.500 782L888 851.500" fill="none" stroke="#87857d" strokeWidth="1.600" />
    <path d="M616.800 341L901.300 258.300 1081.700 307.300" fill="none" stroke="#191917" strokeWidth="1.800" />
    <path d="M622 342L901.300 261.500 1077 308.500M619 340L797.600 400.500 822 393.500Q836 390 843 393" fill="none" stroke="#191917" strokeWidth="1.100" />
    <path d="M619 342.500L797.600 402.500" stroke="#8f8d85" strokeWidth="1.500" />
    <path d="M799.500 404l20 540" stroke="#1c1c1a" strokeWidth="1.200" />
    <path d="M1081.700 308l-6.700 250-6.700 246" stroke="#111" strokeWidth="1.800" fill="none" />
    <path d="M1068.500 806L818.500 957" stroke="#e99c95" strokeWidth="1" />
    <path d="M1068 804.500L818 955" stroke="#1c1c1a" strokeWidth="1.100" strokeDasharray="2 1.500" />

    {/* side bores */}
    <g transform="rotate(-17 707 471)"><ellipse cx="707" cy="471" rx="24.600" ry="40.500" fill="#8f8d85" stroke="#222" strokeWidth="1.200" /><ellipse cx="709" cy="471" rx="22.500" ry="38.500" fill="url(#bore)" stroke="#222" strokeWidth="1.200" /></g>
    <g transform="rotate(-18 727.600 823)"><ellipse cx="727.600" cy="823" rx="22.600" ry="36" fill="#8f8d85" stroke="#222" strokeWidth="1.200" /><ellipse cx="729.500" cy="823" rx="20.500" ry="34" fill="url(#bore)" stroke="#222" strokeWidth="1.200" /></g>
    <path d="M713 835l31-16q5 12 6 22-2 18-19 13-12-7-18-19z" fill="url(#bore2)" />
    <path d="M713 835l31-16" stroke="#222" strokeWidth="1.200" />
  </Scene>
);

const ViewCube = () => (
  <svg width="92" height="92" viewBox="1812 196 92 92">
    <defs><radialGradient id="cubeShadow"><stop offset="0" stopColor="#000" stopOpacity=".35" /><stop offset="1" stopColor="#000" stopOpacity="0" /></radialGradient>
      <linearGradient id="cubeFace" x1="0" x2="0" y1="0" y2="1"><stop offset="0" stopColor="#f3f3f3" /><stop offset="1" stopColor="#d2d2d2" /></linearGradient></defs>
    <ellipse cx="1858" cy="266" rx="40" ry="18" fill="url(#cubeShadow)" />
    <path d="M1821.700 217.300L1856 206l34.700 10-32.400 13.300z" fill="#f2f2f2" />
    <path d="M1821.700 217.300l36.600 12v49l-34-19z" fill="url(#cubeFace)" /><path d="M1890.700 216l-32.400 13.300v49l30-20z" fill="url(#cubeFace)" />
    <path d="M1821.700 217.300L1856 206l34.700 10-32.400 13.300zM1821.700 217.300l2.600 42 34 19 30-20 2.400-42.300M1858.300 229.300v10" fill="none" stroke="#8a8a8a" strokeDasharray="5 2" />
    <text x="1846" y="222" fontFamily={ui} fontSize="7" fontWeight="bold" fill="#999" transform="rotate(-20 1846 222)">HORNÍ</text>
    <text x="1828" y="244" fontFamily={ui} fontSize="8" fontWeight="bold" fill="#989ca0" transform="rotate(20 1828 244)">ZLEVA</text>
    <text x="1860" y="257" fontFamily={ui} fontSize="7" fontWeight="bold" fill="#989ca0" transform="rotate(-24 1860 257)">ZEPŘEDU</text>
    <path d="M1858.300 278v-56" stroke="#5c5ce0" strokeWidth="1.600" /><path d="M1858.300 278L1820 258" stroke="#7fdc82" strokeWidth="1.800" /><path d="M1858.300 278l35-21" stroke="#ee6d6d" strokeWidth="1.800" />
    <g fontFamily={ui} fontSize="13"><text x="1854" y="217" fill="#6a6af0">Z</text><text x="1812" y="260" fill="#90f090">Y</text><text x="1892" y="259" fill="#f58a8a">X</text></g>
  </svg>
);

/* ---------- navigation bar ---------- */
const Lens = ({ zoom }: { zoom?: boolean }) => (
  <svg width="20" height="20" viewBox="0 0 20 20">
    {!zoom && <path d="M.7.700h18.600v18.600H.700z" fill="none" stroke="#999" strokeDasharray="3 2" />}
    <path d="M11 11l7 7" stroke="#3a3a3a" strokeWidth="3" strokeLinecap="round" /><circle cx="7.500" cy="7.500" r="6.300" fill="#eaf6f6" stroke="#888" strokeWidth="1.500" />
    {zoom && <path d="M15 3h5M17.500 1v4M15 7.500h5" stroke="#444" />}
  </svg>
);
const navItems: { w: number; label: string; caret?: boolean; icon: React.ReactNode }[] = [
  { w: 34, label: "Orbita", caret: true, icon: <svg width="20" height="20" viewBox="0 0 20 20"><ellipse cx="10" cy="11" rx="9" ry="4" fill="none" stroke="#555" strokeWidth="1.500" /><path d="M8 19V6H5.500L10 0l4.500 6H12v13z" fill="#e8e8e8" stroke="#666" /></svg> },
  { w: 34, label: "Pohled na", icon: <svg width="20" height="20" viewBox="0 0 20 20"><path d="M2 6l9-4V0l4 3-4 3" stroke="#666" strokeWidth="1.300" fill="none" /><path d="M1 7h17v12H1z" fill="#e8e8e8" stroke="#666" strokeWidth="1.500" /><path d="M4 10h11v6H4z" fill="#9aa0aa" stroke="#555" /></svg> },
  { w: 32, label: "Posun", icon: <svg width="20" height="20" viewBox="0 0 20 20"><path d="M6 19l-3-5-3-3q1-2 3-.500L5 12 4 4q1-2 2.300 0L8 9l-.500-7.500q1.500-2 2.500 0l.700 7L12 2q1.500-1.500 2.300 0L14 9l2-5q2-1 2.200.500L17 12l-3 7z" fill="#fff" stroke="#555" strokeWidth="1.200" /></svg> },
  { w: 32, label: "Lupa", icon: <Lens zoom /> },
  { w: 46, label: "Přizpůsobit", caret: true, icon: <Lens /> },
  { w: 36, label: "Zobrazení", caret: true, icon: <svg width="20" height="20" viewBox="0 0 20 20"><path d="M1 1h18v14H1z" fill="#ddd" stroke="#667" strokeWidth="1.400" /><path d="M3 3h14v10H3z" fill="#8fb6e6" stroke="#456" /><path d="M8 15h4v3h3v1.500H5V18h3z" fill="#777" /></svg> },
  { w: 40, label: "Rastr", caret: true, icon: <svg width="20" height="20" viewBox="0 0 20 20"><path d="M1 1h18v18H1zM5 1v18M9 1v18M13 1v18M17 1v18M1 5h18M1 9h18M1 13h18M1 17h18" fill="#fafafa" stroke="#666" strokeWidth="1.200" /></svg> },
  { w: 35, label: "Výřezy", caret: true, icon: <svg width="20" height="18" viewBox="0 0 20 18"><path d="M1 1h18v16H1z" fill="#8fb2e0" stroke="#345a8a" strokeWidth="1.600" /><path d="M10 1v16M1 9h18" stroke="#345a8a" strokeWidth="1.600" /></svg> },
];

const steps = ["s", "e", "h", "s", "e", "f", "f", "f", "s", "e", "s", "c", "c", "e", "s", "e", "f"];
const stepIcon: Record<string, React.ReactNode> = {
  s: <SketchSteel s={20} blue pencil />, e: <Extrude s={20} />, h: <Shell3d s={20} />, f: <Fillet s={20} />, c: <Chamfer s={20} />,
};
const playPaths = [
  ["Na začátek", "M1 2h3v16H1zM16 2v16L5 10z"], ["Krok zpět", "M2 10l10-8v16zM14 7h3v6h-3z"], ["Přehrát", "M4 0l14 10L4 20z"],
  ["Krok vpřed", "M3 7h3v6H3zM7 2l11 8-11 8z"], ["Na konec", "M3 2l11 8-11 8zM15 2h3v16h-3z"],
];

/* ---------- tray ---------- */
const T = ({ children }: { children: React.ReactNode }) => <svg width="20" height="20" viewBox="0 0 20 20">{children}</svg>;
const tray: [string, React.ReactNode][] = [
  ["Napájení", <T><path d="M6.500 1h1.500v5H6.500zM12 1h1.500v5H12zM5 6h10v4q0 4-3.500 4v6h-3v-6Q5 14 5 10z" fill="#fff" /></T>],
  ["Malwarebytes", <T><path d="M4 2q4 2 6 7 2-5 6-7 5 4 4 9-1 4-4 7 2-6-1-9l-5 7-5-7q-3 3-1 9-3-3-4-7-1-5 4-9z" fill="#2f55d4" /></T>],
  ["Záloha", <T><rect x="1" y="1" width="18" height="18" rx="6" fill="#d3f2f2" /><path d="M14 7a5 5 0 1 0 1 6M8 11h6l3-6M4 3l3 2" stroke="#1f9ea0" strokeWidth="2" fill="none" /></T>],
  ["Virus", <T><circle cx="10" cy="10" r="9.500" fill="#1d2b55" /><circle cx="10" cy="10" r="6" fill="#05070f" /><path d="M7 9l2 1M13 9l-2 1" stroke="#aab" strokeWidth="1.400" /></T>],
  ["Teplota 4.5", <Gauge $bg="#3c3f43">4.5</Gauge>],
  ["Teplota 3.5", <Gauge $bg="#0a7abf">3.5</Gauge>],
  ["Klávesnice", <T><path d="M0 2h18v9H0z" fill="#1f8f88" /><path d="M2 4h14M2 7h14" stroke="#0b4a47" strokeDasharray="2 1" /><path d="M10 9q3-4 8 0l1 7q-1 4-4 3-3 0-4-5z" fill="#ddd" stroke="#888" /></T>],
  ["Teplota 61", <Gauge $bg="#0a80ff">61</Gauge>],
  ["Bluetooth", <T><rect x="3" y="0" width="14" height="20" rx="7" fill="#0a80e8" /><path d="M6.500 6.500l7 7L10 17V3l3.500 3.500-7 7" stroke="#fff" strokeWidth="1.300" fill="none" /></T>],
  ["Baterie", <T><path d="M5 6h13v10H5zM18 9h2v4h-2" fill="none" stroke="#fff" strokeWidth="1.500" /><path d="M8 9h7v4H8zM1 2v4q0 2 2 2t2-2V2M3 8v4" fill="#fff" stroke="#fff" /></T>],
  ["Vytížení", <T><path d="M0 0h20v20H0z" fill="#04130a" /><path d="M5 0v20M10 0v20M15 0v20M0 5h20M0 10h20M0 15h20" stroke="#1b5a2b" /><path d="M0 11h4l2-5 2 9 3-11 2 10 2-3h5" stroke="#e9f03c" fill="none" strokeWidth="1.400" /></T>],
  ["Zabezpečení", <T><path d="M2 3q5 0 8-3 3 3 8 3 0 12-8 16Q2 15 2 3z" fill="#fff" /><path d="M10 1v18M2 9h15" stroke="#33332f" strokeWidth="1.300" /><circle cx="14.500" cy="14.500" r="5.500" fill="#1b9b4a" /><path d="M12 14.500l2 2 3.500-4" stroke="#fff" fill="none" strokeWidth="1.300" /></T>],
  ["Síť", <T><g fill="none" stroke="#fff" strokeWidth="1.300"><path d="M3 18Q3 4 18 3M7 18q0-10 11-11M11 18q0-7 7-7" /></g><circle cx="16" cy="17" r="1.800" fill="#fff" /></T>],
  ["Zvuk", <T><g fill="none" stroke="#fff" strokeWidth="1.300"><path d="M1 7h3l5-4v14l-5-4H1zM12 7q2 3 0 6M15 5q3 5 0 10" /><path d="M18 3q4 7 0 14" opacity=".6" /></g></T>],
  ["TeamViewer", <T><rect x="0" y="1" width="20" height="18" rx="3" fill="#fff" /><circle cx="10" cy="9" r="7" fill="#1f1f1f" /><path d="M4 9l4-3v2h4V6l4 3-4 3v-2H8v2z" fill="#fff" /><path d="M9 13h11v6H9z" fill="#8fd61f" /></T>],
];

export default function App() {
  return (
    <Shell>
      <Global />
      <TitleBar>
        <FusionLogo w={18} h={20} />
        <TitleText>prototyp ubrousky box v8 (noone) - Autodesk Fusion (osobní - jen pro nekomerční využití)</TitleText>
        <WinButton aria-label="Minimalizovat"><svg width="12" height="12"><path d="M0 5.500h12" stroke="#000" /></svg></WinButton>
        <WinButton aria-label="Obnovit"><svg width="12" height="12"><path d="M.5 2.500h9v9h-9zM2.500 2.500v-2h9v9h-2" fill="none" stroke="#000" /></svg></WinButton>
        <WinButton aria-label="Zavřít"><svg width="12" height="12"><path d="M0 0l12 12M12 0L0 12" stroke="#000" strokeWidth="1.200" /></svg></WinButton>
      </TitleBar>

      <TabBar>
        <QuickTools>
          <QuickButton $w={43} aria-label="Datový panel"><svg width="19" height="19" viewBox="0 0 19 19"><path d="M0 0h5v5H0zM7 0h5v5H7zM14 0h5v5h-5zM0 7h5v5H0zM7 7h5v5H7zM14 7h5v5h-5zM0 14h5v5H0zM7 14h5v5H7zM14 14h5v5h-5z" fill="currentColor" /></svg></QuickButton>
          <QuickButton $w={56} aria-label="Soubor"><svg width="16" height="20" viewBox="0 0 16 20"><path d="M0 0h10v7h6v13H0zM11.500 0L16 5.500h-4.500z" fill="currentColor" /></svg><Caret s={9} /></QuickButton>
          <QuickButton $w={41} $dim aria-label="Uložit"><svg width="18" height="19" viewBox="0 0 18 19"><path d="M0 1h16l2 2v16H0z" fill="currentColor" /><path d="M4 1h10v7H4zM4 12h10v7H4z" fill="#cbcbcb" /><path d="M10 2h2v4h-2zM6 14h6v1.500H6zM6 16.500h3V19H6z" fill="currentColor" /></svg></QuickButton>
          <QuickButton $w={49} aria-label="Zpět"><svg width="17" height="17" viewBox="0 0 17 17"><path d="M7 1L1.500 6.500 7 12M2 6.500h6q7 0 7.500 10" fill="none" stroke="currentColor" strokeWidth="2.400" /></svg><Caret s={9} /></QuickButton>
          <QuickButton $w={35} $dim aria-label="Znovu"><svg width="17" height="17" viewBox="0 0 17 17"><path d="M10 1l5.500 5.500L10 12M15 6.500H9q-7 0-7.500 10" fill="none" stroke="currentColor" strokeWidth="2.400" /></svg><Caret s={9} /></QuickButton>
        </QuickTools>
        <HomeTab aria-label="Domů"><svg width="20" height="17" viewBox="0 0 20 17"><path d="M10 0L0 9.500h3V17h5v-6h4v6h5V9.500h3L17 6.500V1h-3v3z" fill="currentColor" /></svg></HomeTab>
        <DocTab $active>
          <DocName><svg width="18" height="20" viewBox="0 0 18 20"><path d="M9 0l9 5-9 5-9-5z" fill="#ffc39c" /><path d="M0 5l9 5v10l-9-5z" fill="#ff9a52" /><path d="M18 5l-9 5v10l9-5z" fill="#ff6d0a" /></svg>prototyp ubrousky box v8</DocName>
          <button aria-label="Zavřít kartu"><Cross /></button>
        </DocTab>
        <DocTab>
          <DocName><svg width="20" height="17" viewBox="0 0 20 17"><path d="M.800.800h18v15H.800z" fill="#f3ece6" stroke="#f09a62" strokeWidth="1.500" /><path d="M4 5h5l2 3h4v4H4z" fill="none" stroke="#f08a48" strokeWidth="1.300" /><path d="M11 12h9v4h-9z" fill="#f5812f" /></svg>prototyp ubrousky box Výkres v1</DocName>
          <button aria-label="Zavřít kartu výkresu"><Cross /></button>
        </DocTab>
        <AddTab aria-label="Nová karta"><svg width="15" height="15"><path d="M7.500 0v15M0 7.500h15" stroke="currentColor" strokeWidth="3.500" /></svg></AddTab>
        <TopActions>
          <TopButton aria-label="Aktualizace"><svg width="20" height="20" viewBox="0 0 20 20"><Up /></svg></TopButton>
          <TopButton aria-label="Rozšíření"><svg width="20" height="20" viewBox="0 0 20 20"><path d="M14 2.500A8.800 8.800 0 0 0 2.600 14M6 18a8.800 8.800 0 0 0 12.500-9" fill="none" stroke="currentColor" strokeWidth="2" /><path d="M3 17l4-3.500Q5.500 8 9.500 6l6 6q-3 3-6.500 2.300L5 18.500z" fill="currentColor" stroke="currentColor" /><path d="M11.500 7.500l4-4M14.500 10.500l4-4" stroke="currentColor" strokeWidth="2" /></svg></TopButton>
          <TopButton aria-label="Stav úloh"><svg width="20" height="20" viewBox="0 0 20 20"><circle cx="10" cy="10" r="9.300" fill="none" stroke="currentColor" strokeWidth="1.200" /><circle cx="10" cy="10" r="7.500" fill="currentColor" /><path d="M9.500 5v6h5" fill="none" stroke="#cbcbcb" strokeWidth="1.700" /></svg></TopButton>
          <TopButton aria-label="Oznámení"><svg width="18" height="20" viewBox="0 0 18 20"><path d="M1 16q3-2 3-7 0-5 4-6V0h2v3q4 1 4 6 0 5 3 7zM6 17.500h6q-3 3.500-6 0z" fill="currentColor" /></svg></TopButton>
          <TopButton aria-label="Nápověda"><svg width="20" height="20" viewBox="0 0 20 20"><circle cx="10" cy="10" r="10" fill="currentColor" /><path d="M6.500 7.500q0-3.500 3.500-3.500t3.500 3q0 2-2 3T10 13" fill="none" stroke="#cbcbcb" strokeWidth="2.200" /><circle cx="10" cy="16" r="1.400" fill="#cbcbcb" /></svg></TopButton>
          <TopButton aria-label="Výuka"><svg width="22" height="18" viewBox="0 0 22 18"><path d="M1 3v13q6-1 10 1 4-2 10-1V3" fill="none" stroke="currentColor" strokeWidth="1.500" /><path d="M3 1q5 0 8 2 3-2 8-2v13q-5 0-8 1-3-1-8-1z" fill="none" stroke="currentColor" strokeWidth="1.500" /><path d="M11 3v12M5 5l4 1M5 8l4 1M5 11l4 1M17 5l-4 1M17 8l-4 1M17 11l-4 1" stroke="currentColor" strokeWidth="1.400" /></svg></TopButton>
          <FlagButton aria-label="Čeština"><svg width="24" height="24" viewBox="0 0 24 24"><clipPath id="ball"><circle cx="12" cy="12" r="12" /></clipPath><g clipPath="url(#ball)"><path d="M0 0h24v12H0z" fill="#f3f3f3" /><path d="M0 12h24v12H0z" fill="#d02a2a" /><path d="M0 3l12 9-12 9z" fill="#26518f" /></g></svg></FlagButton>
          <Avatar>PS</Avatar>
        </TopActions>
      </TabBar>

      <Ribbon>
        <Workspace>NÁVRH <Caret /></Workspace>
        <RibbonBody>
          <RibbonTabs>
            {["3D MODEL", "POVRCH", "SÍŤ", "PLECH", "PLASTY", "POMŮCKY", "SPRÁVA"].map((t, i) => <RibbonTab key={t} $active={i === 0}>{t}</RibbonTab>)}
          </RibbonTabs>
          <Groups>
            {groups.map((g, i) => (
              <React.Fragment key={g.name}>
                {i > 0 && <Divider />}
                <Group>
                  <GroupIcons>{g.icons.map((k) => <ToolButton key={k} $selected={k === "select"} aria-label={k}>{ribbonIcons[k]}</ToolButton>)}</GroupIcons>
                  <GroupLabel>{g.name}<Caret /></GroupLabel>
                </Group>
              </React.Fragment>
            ))}
          </Groups>
        </RibbonBody>
      </Ribbon>
      <RibbonEdge />

      <Stage>
        <Viewport />
        <BrowserPanel>
          <PanelHead>
            <HeadSlot aria-label="Sbalit panel"><svg width="13" height="8"><path d="M6 0v8L0 4zM13 0v8L7 4z" fill="#333" /></svg></HeadSlot>
            <PanelTitle>PROHLÍŽEČ</PanelTitle>
            <button aria-label="Skrýt prohlížeč"><Circle /></button>
          </PanelHead>
          <Tree>
            <Row $level={0}>
              <Expander aria-label="Sbalit"><Arrow open /></Expander>
              <RootChip>
                <PinkMark /><Eye />
                <RootName><svg width="18" height="18" viewBox="0 0 18 18"><path d="M1 5l4-4h12v12l-4 4H1z" fill="#f4f4f4" stroke="#444" strokeWidth="1.200" /><path d="M1.500 5H13v11.500H1.500z" fill="#dde0e6" /><path d="M13 5l3.500-3.500V13L13 16.500z" fill="#aab" /></svg>prototyp ubrousky box v8</RootName>
                <ActiveRadio type="radio" name="active-component" aria-label="Aktivovat komponentu" defaultChecked />
              </RootChip>
            </Row>
            {nodes.map((n) => (
              <Row key={n.text} $level={n.level}>
                {n.open === undefined ? <NoExpander /> : <Expander aria-label={`Rozbalit ${n.text}`}><Arrow open={n.open} /></Expander>}
                <NodeChip n={n} />
              </Row>
            ))}
          </Tree>
        </BrowserPanel>
        <CubeSpot><ViewCube /></CubeSpot>
        <CommentPanel>
          <HeadSlot as="span" />
          <PanelTitle>KOMENTÁŘ</PanelTitle>
          <button aria-label="Přidat komentář"><Circle plus /></button>
        </CommentPanel>
        <NavBar>
          {navItems.map((n) => <NavButton key={n.label} $w={n.w} aria-label={n.label}>{n.icon}{n.caret && <Caret />}</NavButton>)}
        </NavBar>
      </Stage>

      <Timeline>
        <Playback>
          {playPaths.map(([l, d]) => <PlayButton key={l} aria-label={l}><svg width="18" height="18" viewBox="0 0 20 20"><path d={d} fill="#5f5f5f" /></svg></PlayButton>)}
        </Playback>
        <Track>
          <TrackBar />
          <Steps>{steps.map((s, i) => <Step key={i} aria-label={`Prvek ${i + 1}`}>{stepIcon[s]}</Step>)}</Steps>
          <Ruler>{steps.map((_, i) => <Tick key={i} />)}</Ruler>
          <Marker><svg width="15" height="41" viewBox="0 0 15 41"><path d="M0 0h15v7l-6 5v29H6.500V12L0 7z" fill="#5f5f5f" /></svg></Marker>
        </Track>
        <Settings aria-label="Nastavení časové osy"><Gear s={18} /></Settings>
      </Timeline>

      <Taskbar>
        <Launch $w={60} aria-label="Start"><svg width="20" height="20" viewBox="0 0 20 20"><path d="M0 3l8-1.200V9.500H0zM9 1.600L20 0v9.500H9zM0 10.500h8v7.700L0 17zM9 10.500h11V20L9 18.400z" fill="#fff" /></svg></Launch>
        <Launch $w={66} aria-label="Průzkumník"><svg width="28" height="24" viewBox="0 0 28 24"><path d="M0 1h11l3 3h14v19H0z" fill="#e8a317" /><path d="M0 6h28v17H0z" fill="#ffd75e" /><path d="M5 23v-9q0-2 2-2h14q2 0 2 2v9h-5v-5h-8v5z" fill="#3a94d8" /></svg></Launch>
        <Launch $w={60} aria-label="Total Commander"><svg width="28" height="28" viewBox="0 0 28 28"><path d="M0 0h28v28H0z" fill="#1b3fc4" /><path d="M8 0h14v9H8z" fill="#c8ccd8" /><path d="M16 1h4v7h-4z" fill="#1b3fc4" /><path d="M4 12h21v15H4z" fill="#fff" /><path d="M5 15h19M5 18h19M5 21h9M5 24h9" stroke="#e89a9a" strokeWidth="1.300" /><text x="14" y="26" fontFamily={ui} fontWeight="bold" fontSize="8" fill="#111">64</text></svg></Launch>
        <FirstTask $w={190}><svg width="30" height="30" viewBox="0 0 30 30"><circle cx="15" cy="15" r="15" fill="#2da44e" /><path d="M15 15L2 7.500A15 15 0 0 1 28 7.500H15z" fill="#e33b2e" /><path d="M15 7.500h13A15 15 0 0 1 14 30l7.500-13z" fill="#fcc934" /><circle cx="15" cy="15" r="7" fill="#fff" /><circle cx="15" cy="15" r="5.400" fill="#2b76e5" /></svg>cosmetic tissue - HI...</FirstTask>
        <Launch $w={62} aria-label="Opera"><svg width="29" height="30" viewBox="0 0 29 30"><ellipse cx="14.500" cy="15" rx="14.500" ry="15" fill="#e81224" /><ellipse cx="14.500" cy="15" rx="6" ry="10.500" fill="#383835" /></svg></Launch>
        <TaskButton $w={200} $active><Logo><FusionLogo /></Logo>prototyp ubrousky ...</TaskButton>
        <TaskButton $w={190}><svg width="30" height="30" viewBox="0 0 30 30"><circle cx="15" cy="15" r="15" fill="#fff" /><circle cx="15" cy="15" r="9" fill="#2a2a2a" /><path d="M21 8a9 9 0 0 1-12 14z" fill="#f26b21" /><path d="M22 7L8 23" stroke="#fff" strokeWidth="1.500" /></svg>*COSMETIC BOX V2...</TaskButton>

        <Charged>Nabitá</Charged><Nub />
        <Battery>100%</Battery><Nub $fill />
        <Tray>
          {tray.map(([l, icon], i) => <TrayItem key={l} $narrow={i === 0} aria-label={l}>{icon}</TrayItem>)}
        </Tray>
        <PenButton aria-label="Pero"><svg width="22" height="22" viewBox="0 0 22 22"><path d="M7 15L17 2q3-1 3 2L10 17l-4 2zM8 9q-7 3-6 9 2 4 7 0M17 9q4 3-3 7" fill="none" stroke="#fff" strokeWidth="1.300" /></svg></PenButton>
        <Lang>CES</Lang>
        <Clock>8:29<br />05.05.2025</Clock>
        <Notices aria-label="Oznámení systému"><svg width="34" height="34" viewBox="0 0 34 34"><path d="M2 4h20v16H12l-5 5v-5H2z" fill="#fff" /><path d="M5 9h14M5 12h14M5 15h10" stroke="#35322c" strokeWidth="1.300" /><circle cx="23" cy="23" r="10" fill="#3a3832" stroke="#aaa" /><text x="23" y="28" textAnchor="middle" fontFamily={win} fontSize="13" fill="#fff">1</text></svg></Notices>
        <PeekEdge />
      </Taskbar>
    </Shell>
  );
}
